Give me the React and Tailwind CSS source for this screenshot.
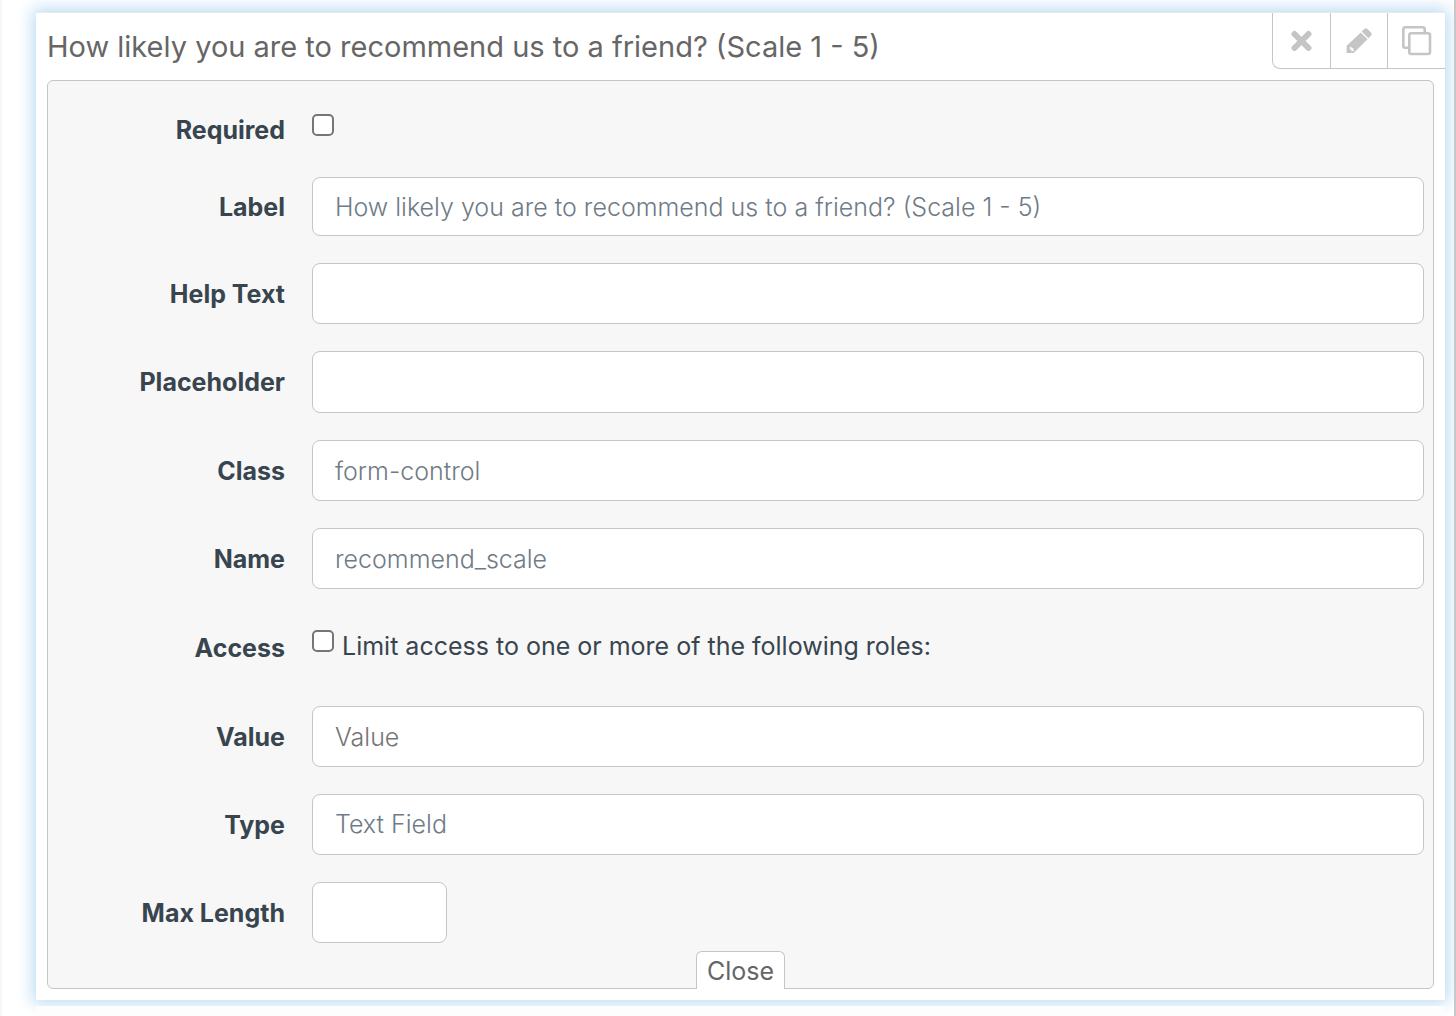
import { useState } from 'react';

const inputStyle =
  'w-full min-w-0 rounded-lg border border-[#c5c5c5] bg-white px-[22px] text-[25px] font-light text-[#6f7b86] placeholder:text-[#757575] outline-none';

const checkboxStyle =
  'h-[22px] w-[22px] shrink-0 appearance-none rounded-[5px] border-2 border-[#767676] bg-white checked:bg-[#0075ff]';

const labelStyle = 'w-[237px] shrink-0 text-right text-[25px] leading-8 font-bold text-[#38454f]';

function Row({ id, label, children }) {
  return (
    <div className="flex items-center gap-[27px]">
      <label htmlFor={id} className={labelStyle}>
        {label}
      </label>
      {children}
    </div>
  );
}

function CloseIcon() {
  return (
    <svg width="22" height="22" viewBox="0 0 22 22" fill="none" stroke="#c5c5c5" strokeWidth="6" strokeLinecap="round">
      <path d="M3.500 4l14 14M17.500 4l-14 14" />
    </svg>
  );
}

function PencilIcon() {
  return (
    <svg width="26" height="26" viewBox="0 0 26 26" fill="#c5c5c5">
      <path d="M15.700 3.600l6.700 6.700 2.500-2.500c1-1 1-2.300 0-3.300l-3.400-3.400c-1-1-2.300-1-3.300 0z" />
      <path fillRule="evenodd" d="M14.800 4.600l6.700 6.700L8.200 24.600 7.400 25H.6v-6.800l.4-.8zM3.800 19.400v2.200h1.600v1.600h1.800l1-1-1-.8v-1.400H5.800l-1-1.400z" />
    </svg>
  );
}

function CopyIcon() {
  return (
    <svg width="30" height="30" viewBox="0 0 30 30" fill="none" stroke="#c5c5c5" strokeWidth="2.600">
      <path d="M6.500 21.700H3.300a2 2 0 0 1-2-2V3.300a2 2 0 0 1 2-2h17.400a2 2 0 0 1 2 2v3.400" />
      <rect x="7.300" y="7.300" width="20.700" height="20.700" rx="2" />
    </svg>
  );
}

export default function App() {
  const [open, setOpen] = useState(true);
  const [required, setRequired] = useState(false);
  const [limitAccess, setLimitAccess] = useState(false);
  const [field, setField] = useState({
    label: 'How likely you are to recommend us to a friend? (Scale 1 - 5)',
    help: '',
    placeholder: '',
    className: 'form-control',
    name: 'recommend_scale',
    value: '',
    type: 'text',
    maxLength: '',
  });

  const handleChange = (e) => {
    setField({ ...field, [e.target.name]: e.target.value });
  };

  return (
    <div className="flex min-h-screen flex-col overflow-hidden border-r-2 border-l-2 border-r-[#c8c8c8] border-l-[#f7f7f7] bg-white pt-3 pr-[9px] pl-[34px] font-['Inter',sans-serif]">
      <div className="border-t border-[#e6eaed] bg-white pb-[11px] shadow-[0_0_16px_3px_#b8daf3]">
        {/* Header */}
        <div className="flex items-start justify-between pl-[11px]">
          <h2 className="pt-[14px] text-[29px] leading-10 text-[#666666]">{field.label}</h2>
          <div className="flex h-14 shrink-0 divide-x divide-[#c5c5c5] rounded-bl-lg border-b border-l border-[#c5c5c5]">
            <button aria-label="Remove" className="flex w-[58px] items-center justify-center">
              <CloseIcon />
            </button>
            <button aria-label="Edit" onClick={() => setOpen(!open)} className="flex w-[57px] items-center justify-center">
              <PencilIcon />
            </button>
            <button aria-label="Copy" className="flex w-[57px] items-center justify-center">
              <CopyIcon />
            </button>
          </div>
        </div>

        {/* Edit panel */}
        {open && (
          <form className="mx-[11px] mt-[11px] flex flex-col rounded-md border border-[#c5c5c5] bg-[#f7f7f7] pt-[33px]">
            <div className="flex flex-col gap-[27px] pr-[9px]">
              <div className="flex items-start gap-[27px] pb-1">
                <label htmlFor="required" className={labelStyle}>
                  Required
                </label>
                <input id="required" type="checkbox" checked={required} onChange={(e) => setRequired(e.target.checked)} className={checkboxStyle} />
              </div>
              <Row id="label" label="Label">
                <input id="label" name="label" value={field.label} onChange={handleChange} className={`${inputStyle} h-[59px]`} />
              </Row>
              <Row id="help" label="Help Text">
                <input id="help" name="help" value={field.help} onChange={handleChange} className={`${inputStyle} h-[61px]`} />
              </Row>
              <Row id="placeholder" label="Placeholder">
                <input id="placeholder" name="placeholder" value={field.placeholder} onChange={handleChange} className={`${inputStyle} h-[62px]`} />
              </Row>
              <Row id="className" label="Class">
                <input id="className" name="className" value={field.className} onChange={handleChange} className={`${inputStyle} h-[61px]`} />
              </Row>
              <Row id="name" label="Name">
                <input id="name" name="name" value={field.name} onChange={handleChange} className={`${inputStyle} h-[61px]`} />
              </Row>
              <div className="flex items-start gap-[27px] pt-[14px] pb-[15px]">
                <label htmlFor="access" className={`${labelStyle} pt-[2px]`}>
                  Access
                </label>
                <div className="flex items-start gap-2">
                  <input id="access" type="checkbox" checked={limitAccess} onChange={(e) => setLimitAccess(e.target.checked)} className={checkboxStyle} />
                  <label htmlFor="access" className="text-[25px] leading-8 text-[#38454f]">
                    Limit access to one or more of the following roles:
                  </label>
                </div>
              </div>
              <Row id="value" label="Value">
                <input id="value" name="value" placeholder="Value" value={field.value} onChange={handleChange} className={`${inputStyle} h-[61px]`} />
              </Row>
              <Row id="type" label="Type">
                <select id="type" name="type" value={field.type} onChange={handleChange} className={`${inputStyle} h-[61px] appearance-none`}>
                  <option value="text">Text Field</option>
                </select>
              </Row>
              <Row id="maxLength" label="Max Length">
                <div className="w-[135px]">
                  <input id="maxLength" name="maxLength" type="number" value={field.maxLength} onChange={handleChange} className={`${inputStyle} block h-[61px]`} />
                </div>
              </Row>
            </div>
            <button
              type="button"
              onClick={() => setOpen(false)}
              className="mx-auto mt-2 -mb-px h-[38px] rounded-t-md border border-b-0 border-[#c5c5c5] bg-white px-[10px] text-[25px] leading-8 text-[#666666]"
            >
              Close
            </button>
          </form>
        )}
      </div>

      {/* Top of the next field in the list */}
      <div className="relative mt-[6px] min-h-[10px] flex-1 bg-[#fdfdfd]" />
    </div>
  );
}
